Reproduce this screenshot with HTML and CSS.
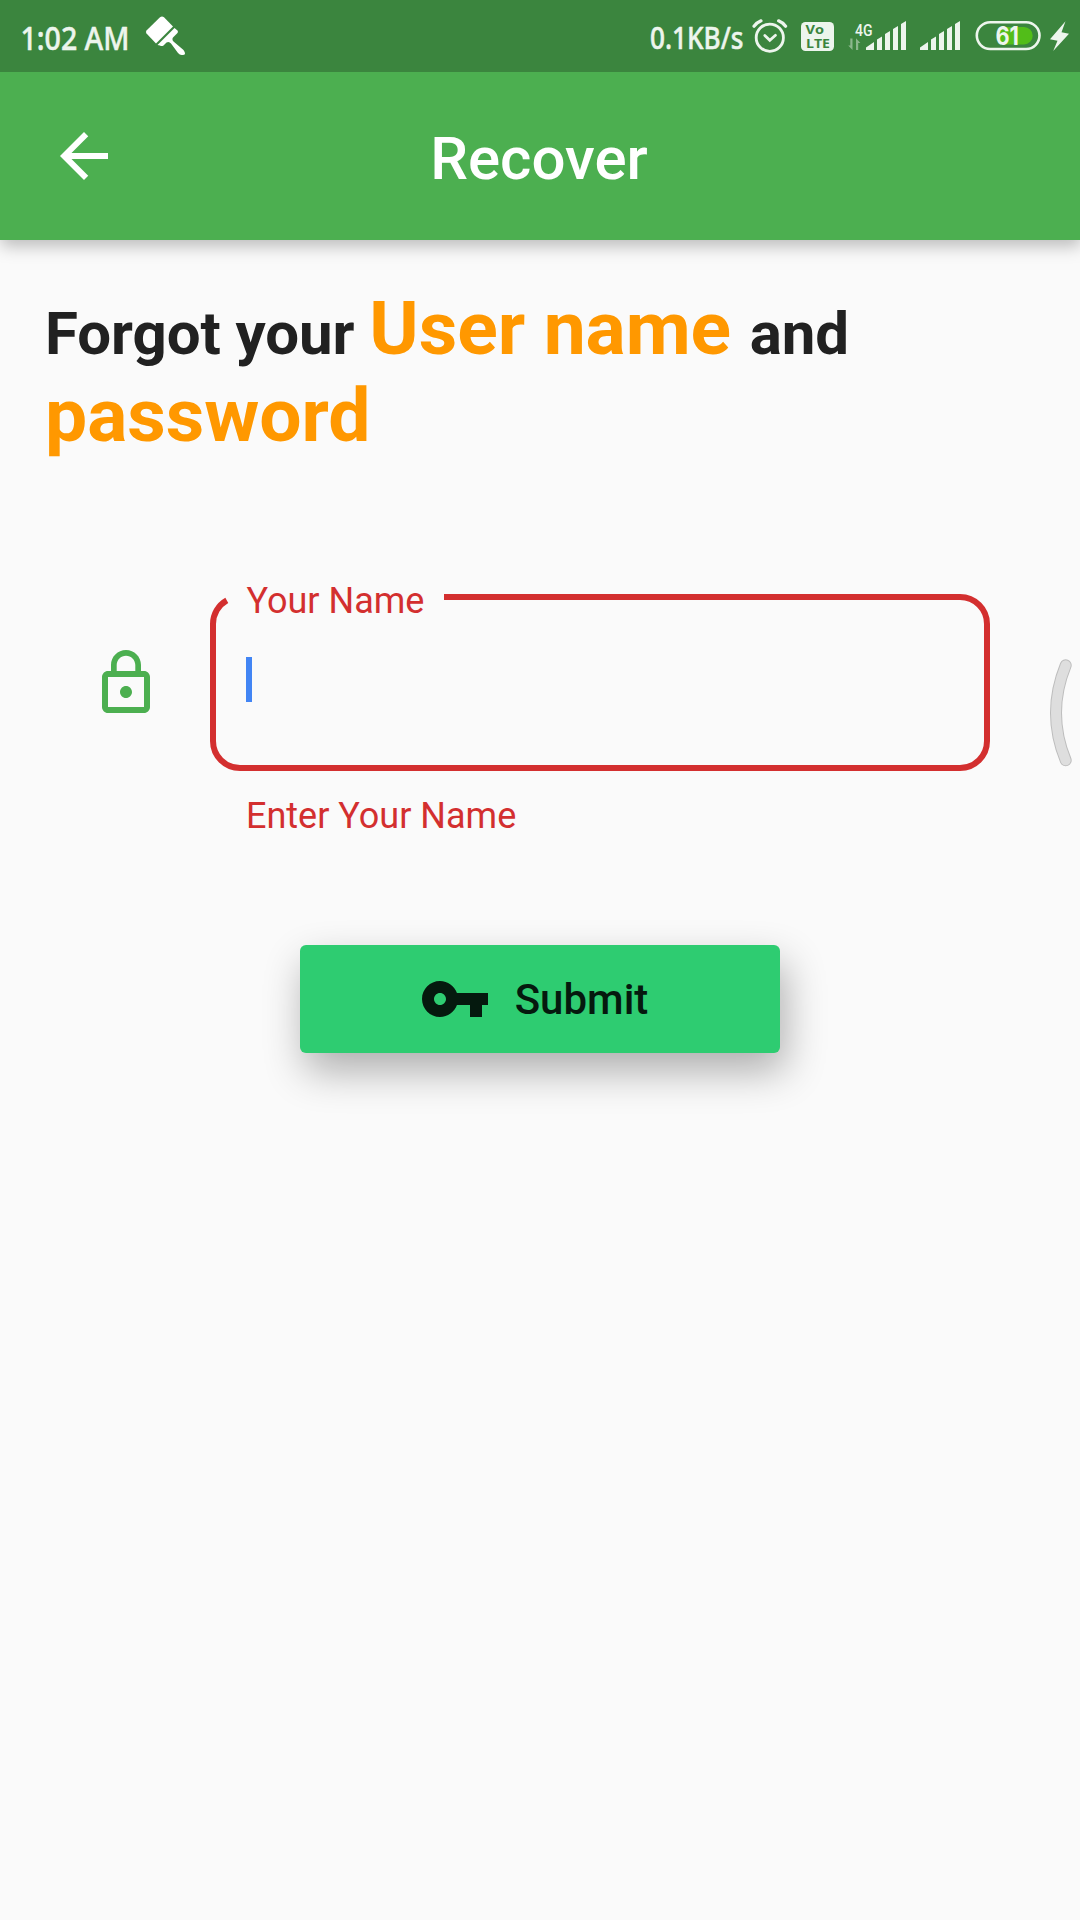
FILE: index.html
```html
<!DOCTYPE html>
<html lang="en">
<head>
<meta charset="utf-8">
<title>Recover</title>
<link rel="stylesheet" href="styles.css">
</head>
<body>
<div class="status-bar">
  <svg class="clock" viewBox="20 10 125 50" width="125" height="50">
    <text x="20.500" y="49.600" textLength="109" lengthAdjust="spacingAndGlyphs">1:02 AM</text>
  </svg>
  <svg class="brush" viewBox="145 15 41 41" width="41" height="41" fill="#fff">
    <path d="M146.500 30.500 160 17.200q2-1.600 4 0L173 26.500 156 43.500 146.500 33.500q-1.200-1.500 0-3z"/>
    <path d="M157.500 45 174.500 28l3 2.500q1 1.500-.5 3l-4 4q-1.300 2 .5 4l10 8.500q3.500 5-1 5-2.500.5-4.500-2l-7-9.500q-2-2.500-4.500-1l-3 3q-2 1.200-3.500 0z"/>
  </svg>
  <svg class="speed" viewBox="650 10 101 50" width="101" height="50">
    <text x="650" y="49.400" textLength="93.500" lengthAdjust="spacingAndGlyphs">0.1KB/s</text>
  </svg>
  <svg class="alarm" viewBox="751 18 37 37" width="37" height="37" fill="none" stroke="#edf5ed" stroke-linecap="round">
    <circle cx="769.800" cy="37.700" r="13.600" stroke-width="2.800"/>
    <path d="M754 26.200q3-3.800 7-5.400M785.600 26.200q-3-3.800-7-5.400" stroke-width="3.200"/>
    <path d="M764.800 35.500l5 4.800 5.700-5" stroke-width="2.800"/>
  </svg>
  <svg class="volte" viewBox="801 22 33 29" width="33" height="29">
    <rect x="801" y="22" width="33" height="29" rx="4.500" fill="#edf5ed"/>
    <text x="805.500" y="34.300" textLength="18.500" lengthAdjust="spacingAndGlyphs">Vo</text>
    <text x="806" y="47.500" textLength="24" lengthAdjust="spacingAndGlyphs">LTE</text>
  </svg>
  <svg class="mobile" viewBox="848 20 59 31" width="59" height="31" fill="#edf5ed">
    <text x="855" y="36" textLength="17.500" lengthAdjust="spacingAndGlyphs">4G</text>
    <path opacity=".45" d="M850.300 38.500h2.200V50l-4.300-4.500h2.100zM856 50h2.200v-7h2.200L856 38.200z"/>
    <path d="M866 50v-2.500l8-5.500V50zM877 50V39.500l5-3V50zM885 50V34l5-3v19zM893 50V29l5-3v24zM901 50V24l5-3v29z"/>
  </svg>
  <svg class="signal" viewBox="920 20 41 31" width="41" height="31" fill="#edf5ed">
    <path d="M920 50v-2.500l8-5.500V50zM931 50V39.500l5-3V50zM939 50V34l5-3v19zM947 50V29l5-3v24zM955 50V24l5-3v29z"/>
  </svg>
  <svg class="battery" viewBox="975 20 66 31" width="66" height="31">
    <rect x="976.800" y="22.200" width="62.700" height="26.800" rx="13.400" fill="none" stroke="#edf5ed" stroke-width="2.600"/>
    <path d="M1000 27h24a8.700 8.700 0 0 1 0 17.400h-24z" fill="#52bd19"/>
    <text x="995.500" y="44.700" textLength="23.500" lengthAdjust="spacingAndGlyphs">61</text>
  </svg>
  <svg class="bolt" viewBox="1049 20 20 32" width="20" height="32" fill="#edf5ed"><path d="M1065.500 21.200 1050 39.200l7.500 1.500L1053.200 51 1069 33.700l-7.500-1.500z"/></svg>
</div>
<header class="app-bar">
  <svg class="back" viewBox="0 0 24 24" width="72" height="72" fill="#fff"><path d="M20 11H7.830l5.590-5.590L12 4l-8 8 8 8 1.410-1.410L7.830 13H20v-2z"/></svg>
  <h1 class="title">Recover</h1>
</header>
<main class="content">
  <h2 class="heading">Forgot your <span class="accent">User name </span>and <span class="accent">password</span></h2>
  <form class="form">
    <div class="field-row">
      <svg class="lock" viewBox="0 0 24 24" width="72" height="72" fill="#4caf50"><path d="M12 17c1.100 0 2-.9 2-2s-.9-2-2-2-2 .9-2 2 .9 2 2 2zm6-9h-1V6c0-2.760-2.240-5-5-5S7 3.240 7 6v2H6c-1.100 0-2 .9-2 2v10c0 1.100.9 2 2 2h12c1.100 0 2-.9 2-2V10c0-1.100-.9-2-2-2zM8.900 6c0-1.710 1.390-3.100 3.100-3.100s3.100 1.390 3.100 3.100v2H8.900V6zM18 20H6V10h12v10z"/></svg>
      <div class="field">
        <svg class="outline" viewBox="0 0 780 177" width="780" height="177" fill="none" stroke="#d32f2f" stroke-width="6"><path d="M234 3H750A27 27 0 0 1 777 30V147A27 27 0 0 1 750 174H30A27 27 0 0 1 3 147V30A27 27 0 0 1 16.800 6.400"/></svg>
        <span class="label">Your Name</span>
        <span class="caret"></span>
      </div>
    </div>
    <p class="error">Enter Your Name</p>
    <button class="submit" type="button">
      <svg class="key" viewBox="0 0 24 24" width="72" height="72" fill="currentColor"><path d="M12.650 10C11.830 7.670 9.610 6 7 6c-3.310 0-6 2.690-6 6s2.690 6 6 6c2.610 0 4.830-1.670 5.650-4H17v4h4v-4h2v-4H12.650zM7 14c-1.100 0-2-.9-2-2s.9-2 2-2 2 .9 2 2-.9 2-2 2z"/></svg>
      <span class="submit-text">Submit</span>
    </button>
  </form>
</main>
<svg class="edge-handle" viewBox="1048 657 32 112" width="32" height="112" fill="none" stroke-linecap="round"><path d="M1065.700 665.300Q1046.300 713 1065.700 760.300" stroke="#bdbdbd" stroke-width="12"/><path d="M1065.700 665.300Q1046.300 713 1065.700 760.300" stroke="#dedede" stroke-width="10"/></svg>
</body>
</html>
```
FILE: styles.css
```css
* { box-sizing: border-box; }

body {
  margin: 0;
  width: 1080px;
  height: 1920px;
  position: relative;
  overflow: hidden;
  background: #fafafa;
  color: #212121;
  font-family: Roboto, sans-serif;
}

svg { display: block; flex: none; }

.status-bar {
  display: flex;
  align-items: flex-start;
  position: relative;
  z-index: 1;
  height: 72px;
  padding-left: 20px;
  background: #3b853e;
}

.clock { margin-top: 10px; }
.clock text, .speed text {
  font: 500 32px "Noto Sans", sans-serif;
  fill: #edf5ed;
  stroke: #edf5ed;
  stroke-width: .5px;
  stroke-linejoin: round;
}
.brush { margin-top: 15px; }
.speed { margin: 10px 0 0 464px; }
.speed text { font-size: 31px; }
.alarm { margin-top: 18px; }
.volte { margin: 22px 0 0 13px; }
.volte text { font: 700 13px "Open Sans", sans-serif; fill: #3b853e; }
.mobile { margin: 20px 0 0 14px; }
.mobile text { font: 500 16px Roboto, sans-serif; }
.signal { margin: 20px 0 0 13px; }
.battery { margin: 20px 0 0 14px; }
.battery text { font: 700 25px Inter, sans-serif; fill: #edf5ed; }
.bolt { margin: 20px 0 0 8px; }

.app-bar {
  display: grid;
  grid-template-columns: 72px 1fr 72px;
  align-items: center;
  height: 168px;
  padding: 0 48px;
  background: #4caf50;
  color: #fff;
  box-shadow: 1px 6px 16px rgba(0, 0, 0, .26);
}

.title {
  margin: 6px 0 0 -2px;
  text-align: center;
  font-size: 60px;
  font-weight: 500;
  line-height: 70px;
}

.content { padding: 45px; }
.heading { margin: 0; font-size: 60px; font-weight: 700; line-height: 70px; letter-spacing: -.06px; }
.accent { color: #ff9800; font-size: 75px; line-height: 87px; }

.form { display: flex; flex-direction: column; padding-top: 135px; }
.field-row { display: flex; align-items: center; gap: 48px; padding-left: 45px; }
.lock { margin-top: 1px; }
.field { position: relative; width: 780px; height: 177px; padding: 63px 36px; }
.outline { position: absolute; inset: 0; }
.label { position: absolute; left: 36.5px; top: -14px; color: #d32f2f; font-size: 36px; line-height: 42px; }
.caret { display: block; width: 6px; height: 45px; background: #4285f4; }
.error { margin: 24px 0 0 201px; color: #d32f2f; font-size: 36px; line-height: 42px; }

.submit {
  display: flex;
  align-items: center;
  justify-content: center;
  align-self: center;
  gap: 24px;
  width: 480px;
  height: 108px;
  margin-top: 108px;
  padding: 0 13px 0 0;
  border: 0;
  border-radius: 6px;
  background: #2ecc71;
  color: #05190e;
  font: 500 42px/49px Roboto, sans-serif;
  box-shadow: 5px 18px 40px rgba(0, 0, 0, .31);
}

.edge-handle { position: absolute; left: 1048px; top: 657px; }
```
